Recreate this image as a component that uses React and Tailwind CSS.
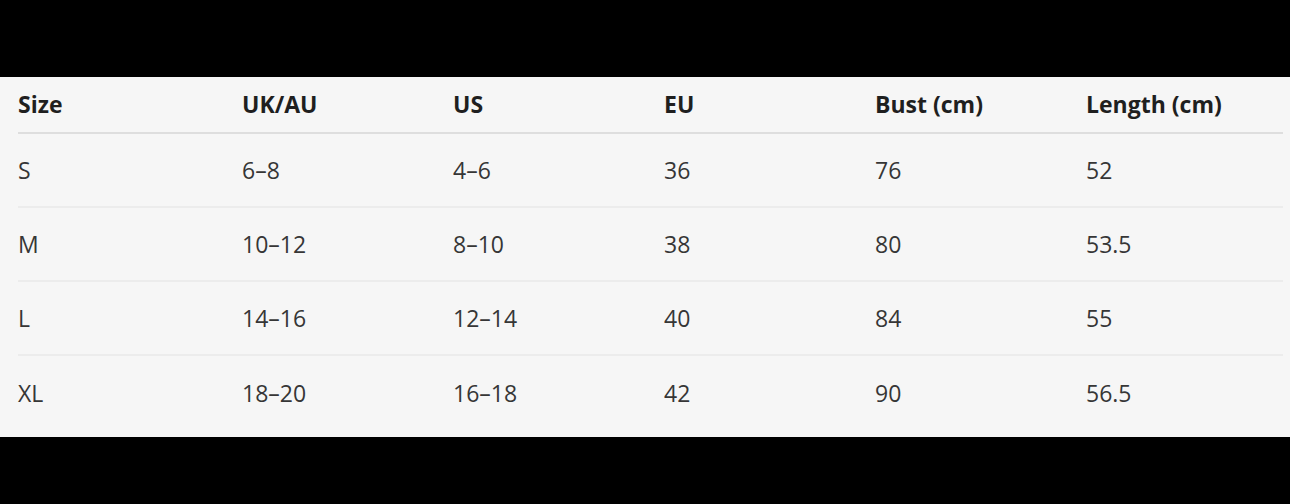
import React from "react";

const headers = ["Size", "UK/AU", "US", "EU", "Bust (cm)", "Length (cm)"];
const rows = [
  ["S", "6–8", "4–6", "36", "76", "52"],
  ["M", "10–12", "8–10", "38", "80", "53.5"],
  ["L", "14–16", "12–14", "40", "84", "55"],
  ["XL", "18–20", "16–18", "42", "90", "56.5"],
];

const cols = "grid grid-cols-[224px_211px_211px_211px_211px_197px]";

export default function App() {
  return (
    <div className="w-[1290px] h-[504px] bg-black flex flex-col" style={{ fontFamily: '"Open Sans", "Noto Sans", sans-serif' }}>
      <div className="h-[77px] shrink-0" />
      <div className="h-[360px] bg-[#f6f6f6] pl-[18px] pr-[7px] text-[23px] leading-none">
        <div className={`${cols} h-[57px] items-center border-b-2 border-[#dedede] font-bold text-[#1f1f1f] pb-[1px]`}>
          {headers.map((h) => (
            <div key={h}>{h}</div>
          ))}
        </div>
        {rows.map((r, i) => (
          <div
            key={i}
            className={`${cols} h-[74px] items-center text-[#363636] pt-[1px] ${i < rows.length - 1 ? "border-b-2 border-[#ececec]" : ""}`}
          >
            {r.map((c, j) => (
              <div key={j}>{c}</div>
            ))}
          </div>
        ))}
      </div>
    </div>
  );
}
